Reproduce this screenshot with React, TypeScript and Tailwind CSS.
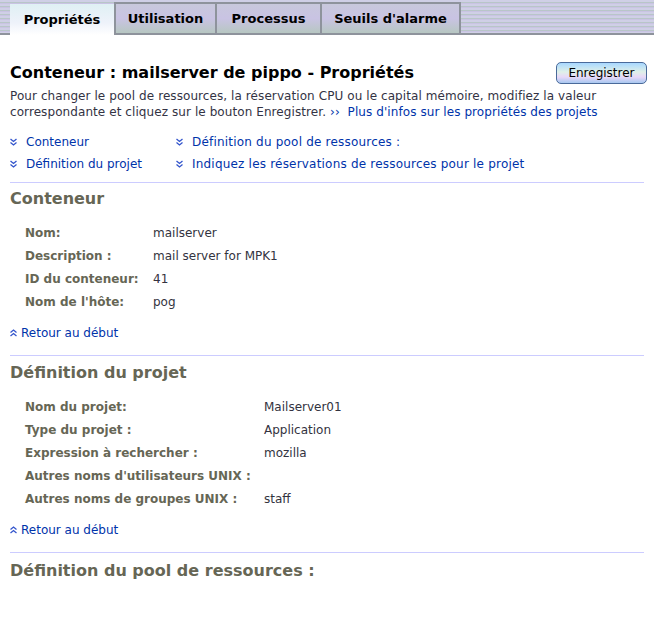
import React from 'react';

const stripes =
  'bg-[repeating-linear-gradient(180deg,#cfcfe6_0px,#cfcfe6_2px,#b8c6c8_2px,#b8c6c8_3px,#c9c3e3_3px,#c9c3e3_4px)]';

const Chevron = ({ up = false }: { up?: boolean }) => (
  <svg width="7" height="8" viewBox="0 0 7 8" className={up ? 'rotate-180' : ''}>
    <path d="M0.5 1 L3.5 3.5 L6.5 1 M0.5 4.5 L3.5 7 L6.5 4.5" fill="none" stroke="#3355cc" strokeWidth="1.3" />
  </svg>
);

const tabs = [
  { label: 'Propriétés', w: 'w-[104px]', active: true },
  { label: 'Utilisation', w: 'w-[101px]', active: false },
  { label: 'Processus', w: 'w-[105px]', active: false },
  { label: "Seuils d'alarme", w: 'w-[139px]', active: false },
];

interface Row {
  label: string;
  value: string;
}

const conteneurRows: Row[] = [
  { label: 'Nom:', value: 'mailserver' },
  { label: 'Description :', value: 'mail server for MPK1' },
  { label: 'ID du conteneur:', value: '41' },
  { label: "Nom de l'hôte:", value: 'pog' },
];

const projetRows: Row[] = [
  { label: 'Nom du projet:', value: 'Mailserver01' },
  { label: 'Type du projet :', value: 'Application' },
  { label: 'Expression à rechercher :', value: 'mozilla' },
  { label: "Autres noms d'utilisateurs UNIX :", value: '' },
  { label: 'Autres noms de groupes UNIX :', value: 'staff' },
];

const Props = ({ rows, labelW }: { rows: Row[]; labelW: string }) => (
  <div className="pl-[15px] pt-[12px]">
    {rows.map((r) => (
      <div key={r.label} className="flex h-[23px] items-center">
        <div className={`${labelW} font-bold text-[#666655]`}>{r.label}</div>
        <div className="text-[#333340]">{r.value}</div>
      </div>
    ))}
  </div>
);

const BackToTop = () => (
  <a href="#" className="mt-[12px] flex items-center gap-[4px] text-[#0033aa]">
    <Chevron up />
    <span>Retour au début</span>
  </a>
);

export default function App() {
  return (
    <div className="w-[654px] min-h-[621px] bg-white font-['DejaVu_Sans',sans-serif] text-[12px] leading-[16px] text-[#333344]">
      <div className={`h-[35px] flex items-end pl-[10px] border-b-2 border-[#8e939c] ${stripes}`}>
        {tabs.map((t) =>
          t.active ? (
            <div
              key={t.label}
              className={`${t.w} h-[31px] -mb-[2px] flex items-center justify-center font-bold text-[13px] text-black bg-[linear-gradient(180deg,#dff0f4,#eef2fa_60%,#ffffff)]`}
            >
              {t.label}
            </div>
          ) : (
            <div
              key={t.label}
              className={`${t.w} h-[31px] flex items-center justify-center font-bold text-[13px] text-black border-l-2 border-t-2 border-[#8e939c] bg-[linear-gradient(180deg,#c8c8dc,#c9c3e3_50%,#b7c7c2)]`}
            >
              {t.label}
            </div>
          )
        )}
        <div className="flex-1 h-[31px] border-l-2 border-[#8e939c]" />
      </div>

      <div className="px-[10px]">
        <div className="mt-[28px] flex items-start justify-between">
          <h1 className="text-[16px] leading-[20px] font-bold text-black">
            Conteneur : mailserver de pippo - Propriétés
          </h1>
          <button className="-mt-[1px] mr-[-3px] h-[22px] w-[91px] rounded-[5px] border border-[#4a6a9a] text-[12px] text-black bg-[linear-gradient(180deg,#a8d8ff,#e0f0e8_45%,#e8d8f8_70%,#a8c8f0)]">
            Enregistrer
          </button>
        </div>
        <div className="mt-[4px] tracking-[0.08px]">
          <div>Pour changer le pool de ressources, la réservation CPU ou le capital mémoire, modifiez la valeur</div>
          <div className="flex gap-[4px]">
            <span>correspondante et cliquez sur le bouton Enregistrer.</span>
            <a href="#" className="text-[#0033aa]">
              ››&nbsp; Plus d'infos sur les propriétés des projets
            </a>
          </div>
        </div>

        <div className="mt-[14px] flex">
          <div className="w-[166px] flex flex-col gap-[6px] text-[#0033aa]">
            <a href="#" className="flex items-center gap-[9px]">
              <Chevron />
              <span>Conteneur</span>
            </a>
            <a href="#" className="flex items-center gap-[9px]">
              <Chevron />
              <span>Définition du projet</span>
            </a>
          </div>
          <div className="flex flex-col gap-[6px] text-[#0033aa] tracking-[0.2px]">
            <a href="#" className="flex items-center gap-[9px]">
              <Chevron />
              <span>Définition du pool de ressources :</span>
            </a>
            <a href="#" className="flex items-center gap-[9px]">
              <Chevron />
              <span>Indiquez les réservations de ressources pour le projet</span>
            </a>
          </div>
        </div>

        <hr className="mt-[10px] border-t border-[#ccccff]" />
        <h2 className="mt-[6px] text-[16px] leading-[20px] font-bold text-[#666655]">Conteneur</h2>
        <Props rows={conteneurRows} labelW="w-[128px]" />
        <BackToTop />

        <hr className="mt-[14px] border-t border-[#ccccff]" />
        <h2 className="mt-[7px] text-[16px] leading-[20px] font-bold text-[#666655]">Définition du projet</h2>
        <Props rows={projetRows} labelW="w-[239px]" />
        <BackToTop />

        <hr className="mt-[14px] border-t border-[#ccccff]" />
        <h2 className="mt-[8px] text-[16px] leading-[20px] font-bold text-[#666655]">
          Définition du pool de ressources :
        </h2>
      </div>
    </div>
  );
}
